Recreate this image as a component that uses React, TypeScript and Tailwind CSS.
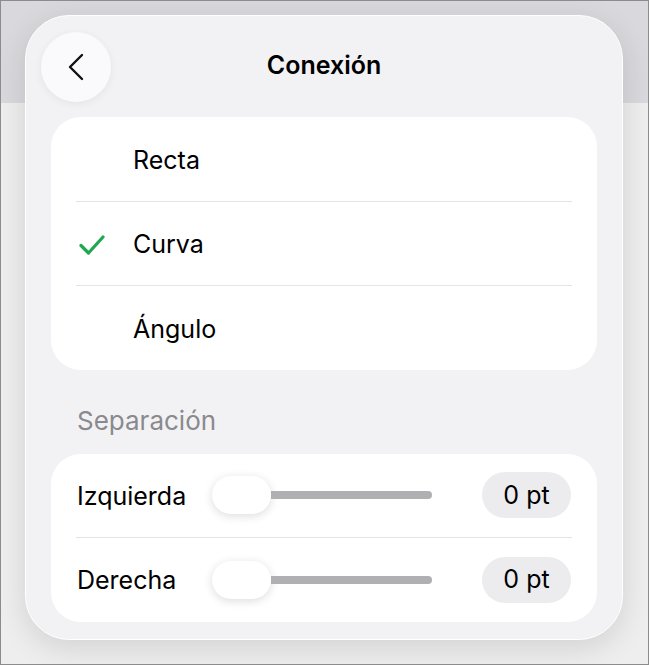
import React from 'react';

const font = { fontFamily: 'Inter, "Noto Sans", sans-serif' };

const options = [
  { label: 'Recta', checked: false },
  { label: 'Curva', checked: true },
  { label: 'Ángulo', checked: false },
];

const sliders = ['Izquierda', 'Derecha'];

const Check = () => (
  <svg width="26" height="22" viewBox="0 0 26 22" fill="none">
    <path d="M2 11.5 L9.5 19 L24 3" stroke="#1ea84f" strokeWidth="3.2" strokeLinecap="round" strokeLinejoin="round" />
  </svg>
);

const Chevron = () => (
  <svg width="16" height="28" viewBox="0 0 16 28" fill="none">
    <path d="M14 2 L2 14 L14 26" stroke="#111" strokeWidth="2.4" strokeLinecap="round" strokeLinejoin="round" />
  </svg>
);

export default function App() {
  return (
    <div
      className="w-[649px] h-[665px] border border-[#8c8c8c] overflow-hidden bg-[linear-gradient(to_bottom,#d9d9dd_0px,#d9d9dd_102px,#eeeeef_102px)] pt-[14px] pl-[24px]"
      style={font}
    >
      <div className="w-[598px] h-[625px] rounded-[44px] bg-[#f2f2f5] border border-white shadow-[0_8px_30px_rgba(0,0,0,0.12)] flex flex-col">
        {/* header */}
        <div className="relative h-[101px] flex items-center justify-center pb-[2px]">
          <button className="absolute left-[15px] top-[16px] w-[70px] h-[70px] rounded-full bg-[#fafafc] shadow-[0_2px_10px_rgba(0,0,0,0.06)] flex items-center justify-center">
            <Chevron />
          </button>
          <span className="text-[25px] font-semibold text-black">Conexión</span>
        </div>

        {/* connection type */}
        <div className="mx-[25px] bg-white rounded-[30px] flex flex-col">
          {options.map((o, i) => (
            <div key={o.label}>
              {i > 0 && <div className="mx-[25px] h-px bg-[#e4e4e8]" />}
              <div className="h-[83.5px] flex items-center pt-[3px]">
                <div className="w-[82px] pl-[28px] flex items-center">{o.checked && <Check />}</div>
                <span className="text-[25px] text-black">{o.label}</span>
              </div>
            </div>
          ))}
        </div>

        <div className="h-[84px] flex items-center pl-[51px] pt-[18px]">
          <span className="text-[26px] text-[#8a8a8e]">Separación</span>
        </div>

        {/* separation */}
        <div className="mx-[25px] bg-white rounded-[30px] flex flex-col">
          {sliders.map((s, i) => (
            <div key={s}>
              {i > 0 && <div className="mx-[25px] h-px bg-[#e4e4e8]" />}
              <div className="h-[83.5px] flex items-center pl-[26px] pr-[26px]">
                <span className="w-[135px] text-[25px] text-black pt-[2px]">{s}</span>
                <div className="flex items-center">
                  <div className="w-[59px] h-[38px] rounded-full bg-white shadow-[0_2px_10px_rgba(0,0,0,0.14)]" />
                  <div className="w-[161px] h-[8px] rounded-r-full bg-[#b0b0b2]" />
                </div>
                <div className="ml-auto w-[89px] h-[46px] rounded-full bg-[#ececef] flex items-center justify-center text-[25px] text-black">
                  0 pt
                </div>
              </div>
            </div>
          ))}
        </div>
      </div>
    </div>
  );
}
